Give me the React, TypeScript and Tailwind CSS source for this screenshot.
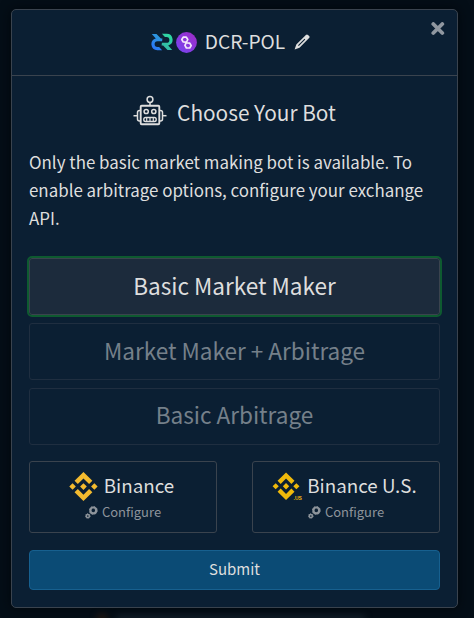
import React from "react";

const DCR_STROKE =
  "M.8.9h4.700l4.400 4.600h1.500l-.3 2.700H6.500a2.900 2.900 0 0 0 0 5.800h1.600l3 3.200H6.300a5.900 5.900 0 0 1-1.500-11.600z";

function DecredLogo() {
  return (
    <svg width="22" height="18" viewBox="0 0 22 18" className="block shrink-0">
      <defs>
        <linearGradient id="dcrBlue" x1="0" y1="1" x2="0.600" y2="0">
          <stop offset="0" stopColor="#2970ff" />
          <stop offset="1" stopColor="#2d9bd8" />
        </linearGradient>
        <linearGradient id="dcrGreen" x1="1" y1="0" x2="0.400" y2="1">
          <stop offset="0" stopColor="#35b0a8" />
          <stop offset="1" stopColor="#2ed8a3" />
        </linearGradient>
      </defs>
      <path d={DCR_STROKE} fill="url(#dcrBlue)" />
      <path d={DCR_STROKE} fill="url(#dcrGreen)" transform="rotate(180 11 9)" />
    </svg>
  );
}

function PolygonLogo() {
  return (
    <svg width="21" height="21" viewBox="0 0 21 21" className="block shrink-0">
      <defs>
        <linearGradient id="polFill" x1="0" y1="1" x2="1" y2="0">
          <stop offset="0" stopColor="#7446f2" />
          <stop offset="1" stopColor="#a02bc6" />
        </linearGradient>
      </defs>
      <circle cx="10.500" cy="10.500" r="10.400" fill="url(#polFill)" />
      <path
        d="M9.800 10.200L7.100 9.900 5.800 7.500 7.200 5.200H10.300L11.800 7.500 8.900 13.400 10.400 16H13.700L15.200 13.600 13.800 11.200 11.200 10.900"
        fill="none"
        stroke="#f3e8fb"
        strokeWidth="1.700"
        strokeLinejoin="round"
        strokeLinecap="round"
      />
    </svg>
  );
}

function PencilIcon() {
  return (
    <svg width="16" height="16" viewBox="0 0 16 16" className="block shrink-0">
      <path
        fill="#dedede"
        fillRule="evenodd"
        d="M11.900.9a1.500 1.500 0 0 1 2.100 0l1.100 1.100a1.500 1.500 0 0 1 0 2.100L5.500 13.700.6 15.400l1.700-4.900zM4 11.200l.8.8 6.500-6.500-.8-.8z"
      />
    </svg>
  );
}

function CloseIcon() {
  return (
    <svg width="14" height="14" viewBox="0 0 14 14" className="block">
      <path d="M2.300 2l9 9M11.300 2l-9 9" stroke="#9097a0" strokeWidth="3.800" strokeLinecap="round" />
    </svg>
  );
}

function RobotIcon() {
  return (
    <svg width="34" height="31" viewBox="0 0 34 31" className="block shrink-0">
      <g fill="none" stroke="#dedede" strokeWidth="1.500">
        <circle cx="17" cy="4.500" r="2.900" />
        <path d="M17 7.400v3M.5 20.700h4" />
        <path d="M29.500 20.700h4" />
        <rect x="7.700" y="10.700" width="18.600" height="18.600" rx="1" strokeWidth="1.900" />
        <path d="M7.700 15.500H6.500a2 2 0 0 0-2 2V24a2 2 0 0 0 2 2h1.200M26.300 15.500h1.200a2 2 0 0 1 2 2V24a2 2 0 0 1-2 2h-1.200" />
        <circle cx="13.200" cy="16.500" r="2.100" />
        <circle cx="20.800" cy="16.500" r="2.100" />
        <rect x="10.800" y="22.500" width="12.400" height="4" rx="1.800" strokeWidth="1.400" />
        <path d="M13.700 22.500v4M17 22.500v4M20.300 22.500v4" strokeWidth="1.200" />
      </g>
    </svg>
  );
}

function BinanceLogo({ us = false }: { us?: boolean }) {
  return (
    <svg width="29" height="29" viewBox="0 0 29 29" className="block shrink-0 overflow-visible">
      <g fill={us ? "#f0b90b" : "#f3ba2f"}>
        <path
          d="M8.800 12l5.700-5.700 5.700 5.700 3.300-3.300L14.500-.2l-9 8.900zM.2 14.500l3.300-3.300 3.300 3.300-3.300 3.300zM8.800 17l5.700 5.700 5.700-5.700 3.300 3.300-9 8.900-9-8.900zM22.200 14.500l3.300-3.300 3.300 3.300-3.300 3.300zM17.900 14.500l-3.400 3.400-3.400-3.400 3.400-3.400z"
          transform={us ? "translate(.4 .6) scale(.94)" : "translate(.1 .2) scale(.99)"}
        />
        {us && (
          <text x="21.500" y="28.300" fontSize="5" fontWeight="700" fontFamily="Liberation Sans, sans-serif">
            .US
          </text>
        )}
      </g>
    </svg>
  );
}

function GearsIcon() {
  return (
    <svg width="13" height="13" viewBox="0 0 13 13" className="block shrink-0">
      <g fill="none" stroke="#8e949b">
        <circle cx="8.300" cy="4.400" r="2.900" strokeWidth="2.200" />
        <circle cx="8.300" cy="4.400" r="3.900" strokeWidth="1" strokeDasharray="1.500 1.560" />
        <circle cx="2.800" cy="10" r="1.600" strokeWidth="1.500" />
        <circle cx="2.800" cy="10" r="2.400" strokeWidth=".8" strokeDasharray="1 .88" />
      </g>
    </svg>
  );
}

function Exchange({ name, us }: { name: string; us?: boolean }) {
  return (
    <button className="flex h-[72px] w-[188px] flex-col items-center rounded-[3px] border border-[#3a434e] pt-[10px]">
      <span className="mr-[3px] flex h-[29px] items-center gap-[6px]">
        <BinanceLogo us={us} />
        <span className="-mt-[5px] text-[18.750px] leading-[29px] whitespace-nowrap">{name}</span>
      </span>
      <span className="flex h-[22px] items-center gap-[4px] text-[13px] leading-[22px] text-[#8e949b]">
        <GearsIcon />
        <span>Configure</span>
      </span>
    </button>
  );
}

export default function App() {
  return (
    <div className="h-[618px] w-[474px] overflow-hidden bg-[#040e17] pt-[9px] pl-[11px] font-['Noto_Sans_CJK_SC','Noto_Sans',sans-serif] text-[#dedede]">
      <div className="relative h-[599px] w-[447px] rounded-[5px] border border-[#3a434e] bg-[#0b1f33] shadow-[0_0_12px_#02070c]">
        <button aria-label="Close" className="absolute top-[12px] right-[12px]">
          <CloseIcon />
        </button>
        <header className="flex h-[66px] items-center justify-center border-b border-[#3a434e] pr-[8px] pb-px">
          <DecredLogo />
          <span className="ml-[3px]">
            <PolygonLogo />
          </span>
          <span className="-mt-[3px] ml-[8px] text-[19.200px] leading-[28px]">DCR-POL</span>
          <span className="ml-[9px]">
            <PencilIcon />
          </span>
        </header>
        <main className="px-[17px]">
          <div className="flex h-[73px] items-center justify-center gap-[10px]">
            <span className="-mt-[4px]">
              <RobotIcon />
            </span>
            <h1 className="-mt-px text-[20.800px] leading-[30px]">Choose Your Bot</h1>
          </div>
          <p className="-mt-px text-[16.920px] leading-[28px]">
            Only the basic market making bot is available. To enable arbitrage options, configure your exchange API.
          </p>
          <div className="mt-[26px] flex flex-col gap-2 text-[22.550px]">
            <button className="h-[57px] rounded-[3px] border border-[#3a434e] bg-[#1c2b3c] pb-[2px] outline-2 outline-[#0e5a30]">
              Basic Market Maker
            </button>
            <button className="h-[57px] rounded-[3px] border border-[#1f2e40] pb-[2px] text-[#75808a]">
              Market Maker + Arbitrage
            </button>
            <button className="h-[57px] rounded-[3px] border border-[#1f2e40] pb-[3px] text-[#75808a]">
              Basic Arbitrage
            </button>
          </div>
          <div className="mt-4 flex justify-between">
            <Exchange name="Binance" />
            <Exchange name="Binance U.S." us />
          </div>
          <button className="mt-[17px] block h-[40px] w-full rounded-[4px] border border-[#17608f] bg-[#0b4b75] pb-px text-[15px]">
            Submit
          </button>
        </main>
      </div>
      <div className="mt-[5px] ml-[85px] flex h-[12px] items-center gap-2 blur-[3px]" aria-hidden="true">
        <span className="size-3 rounded-full bg-[#1c1512]" />
        <span className="h-2 w-[250px] rounded bg-[#111d27]" />
      </div>
    </div>
  );
}
